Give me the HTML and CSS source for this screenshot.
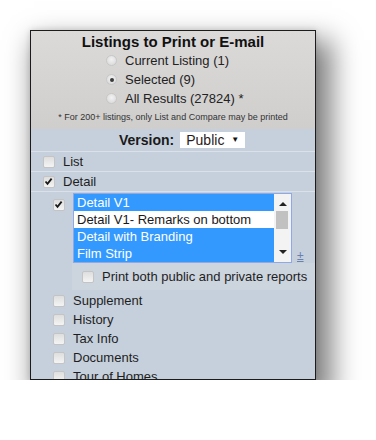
FILE: index.html
```html
<!DOCTYPE html>
<html>
<head>
<meta charset="utf-8">
<link rel="stylesheet" href="styles.css">
</head>
<body>
<div class="panel">
  <div class="head">
    <div class="title">Listings to Print or E-mail</div>
    <div class="radios">
      <div class="radio-row"><span class="radio"></span>Current Listing (1)</div>
      <div class="radio-row"><span class="radio on"></span>Selected (9)</div>
      <div class="radio-row"><span class="radio"></span>All Results (27824) *</div>
    </div>
    <div class="note">* For 200+ listings, only List and Compare may be printed</div>
  </div>
  <div class="version">
    <span class="vlabel">Version:</span>
    <span class="select">Public<span class="arrow">&#9660;</span></span>
  </div>
  <div class="row sep"><span class="cb"></span>List</div>
  <div class="row sep"><span class="cb checked"><svg viewBox="0 0 11 11" width="11" height="11"><path d="M2.5 5.5 L4.5 7.8 L8.6 2.6" fill="none" stroke="#1a1a1a" stroke-width="1.8"/></svg></span>Detail</div>
  <div class="sub">
    <span class="cb checked"><svg viewBox="0 0 11 11" width="11" height="11"><path d="M2.5 5.5 L4.5 7.8 L8.6 2.6" fill="none" stroke="#1a1a1a" stroke-width="1.8"/></svg></span>
    <div class="listbox">
      <div class="items">
        <div class="item sel">Detail V1</div>
        <div class="item">Detail V1- Remarks on bottom</div>
        <div class="item sel">Detail with Branding</div>
        <div class="item sel">Film Strip</div>
      </div>
      <div class="scroll">
        <span class="up"></span>
        <span class="thumb"></span>
        <span class="down"></span>
      </div>
    </div>
    <span class="pm">&plusmn;</span>
  </div>
  <div class="print"><span class="cb"></span>Print both public and private reports</div>
  <div class="more">
    <div class="row2"><span class="cb"></span>Supplement</div>
    <div class="row2"><span class="cb"></span>History</div>
    <div class="row2"><span class="cb"></span>Tax Info</div>
    <div class="row2"><span class="cb"></span>Documents</div>
    <div class="row2"><span class="cb"></span>Tour of Homes</div>
  </div>
</div>
</body>
</html>
```

FILE: styles.css
```css
html, body {
  margin: 0;
  padding: 0;
  background: #ffffff;
}
body {
  font-family: "Liberation Sans", Arial, sans-serif;
  color: #1e1e1e;
  font-size: 13px;
}
.panel {
  margin: 30px 0 0 30px;
  width: 284px;
  height: 348px;
  border: 1px solid #1c1c1c;
  background: #c6d0dc;
  overflow: hidden;
  box-shadow: 10px 16px 26px 6px rgba(0, 0, 0, 0.5), 0 0 6px rgba(0, 0, 0, 0.15);
}
.head {
  background: linear-gradient(#dbdad9, #cfcecd);
  height: 96px;
  padding-top: 2px;
}
.title {
  font-weight: bold;
  font-size: 15px;
  line-height: 18px;
  text-align: center;
  color: #111;
}
.radios {
  padding-left: 75px;
}
.radio-row {
  display: flex;
  align-items: center;
  height: 19px;
  font-size: 13px;
  color: #222;
}
.radio {
  width: 9px;
  height: 9px;
  border-radius: 50%;
  border: 1px solid #c8c8c8;
  background: radial-gradient(circle at 50% 40%, #f2f2f2, #d6d6d6);
  margin-right: 8px;
  position: relative;
}
.radio.on::after {
  content: "";
  position: absolute;
  left: 2.5px;
  top: 2.5px;
  width: 4px;
  height: 4px;
  border-radius: 50%;
  background: #3a3a3a;
}
.note {
  font-size: 9px;
  line-height: 19px;
  height: 19px;
  text-align: center;
  color: #333;
}
.version {
  height: 22px;
  border-bottom: 1px solid #dbe1e8;
  display: flex;
  align-items: center;
  padding-left: 88px;
}
.vlabel {
  font-weight: bold;
  font-size: 14px;
  color: #1a1a1a;
  margin-right: 6px;
}
.select {
  width: 59px;
  height: 16px;
  background: #ffffff;
  display: flex;
  align-items: center;
  padding-left: 6px;
  font-size: 14px;
  color: #2a1a1a;
  position: relative;
}
.arrow {
  position: absolute;
  left: 51px;
  top: 3px;
  font-size: 8px;
  color: #111;
}
.row {
  height: 19px;
  display: flex;
  align-items: center;
  padding-left: 12px;
  font-size: 13px;
}
.sep {
  border-bottom: 1px solid #dbe1e8;
}
.cb {
  width: 10px;
  height: 10px;
  border: 1px solid #c4c4c4;
  border-radius: 2px;
  background: linear-gradient(#dedede, #f4f4f4);
  margin-right: 8px;
  display: inline-block;
  flex: none;
  position: relative;
}
.cb svg {
  position: absolute;
  left: -1px;
  top: -1px;
}
.sub {
  display: flex;
  align-items: flex-start;
  padding-left: 22px;
  padding-top: 1px;
  height: 70px;
}
.sub > .cb {
  margin-top: 6px;
}
.listbox {
  width: 217px;
  height: 68px;
  border: 1px solid #8fa8e8;
  background: #ffffff;
  display: flex;
}
.items {
  flex: 1;
}
.item {
  height: 17px;
  line-height: 17px;
  padding-left: 3px;
  font-size: 13px;
  color: #1a1a1a;
  white-space: nowrap;
}
.item.sel {
  background: #3399ff;
  color: #ffffff;
}
.scroll {
  width: 17px;
  background: #f3f3f3;
  position: relative;
}
.up, .down {
  position: absolute;
  left: 5px;
  width: 0;
  height: 0;
  border-left: 4px solid transparent;
  border-right: 4px solid transparent;
}
.up {
  top: 8px;
  border-bottom: 4px solid #222;
}
.down {
  bottom: 8px;
  border-top: 4px solid #222;
}
.thumb {
  position: absolute;
  left: 2px;
  top: 17px;
  width: 12px;
  height: 18px;
  background: #c1c1c1;
}
.pm {
  align-self: flex-end;
  margin-left: 5px;
  margin-bottom: 1px;
  font-size: 12px;
  color: #6a80ad;
  line-height: 12px;
  text-decoration: underline;
}
.print {
  margin-left: 41px;
  height: 27px;
  background: #ccd4de;
  display: flex;
  align-items: center;
  padding-left: 10px;
  font-size: 13px;
  white-space: nowrap;
}
.more {
  padding-top: 1px;
}
.row2 {
  height: 19px;
  display: flex;
  align-items: center;
  padding-left: 22px;
  font-size: 13px;
}
```
